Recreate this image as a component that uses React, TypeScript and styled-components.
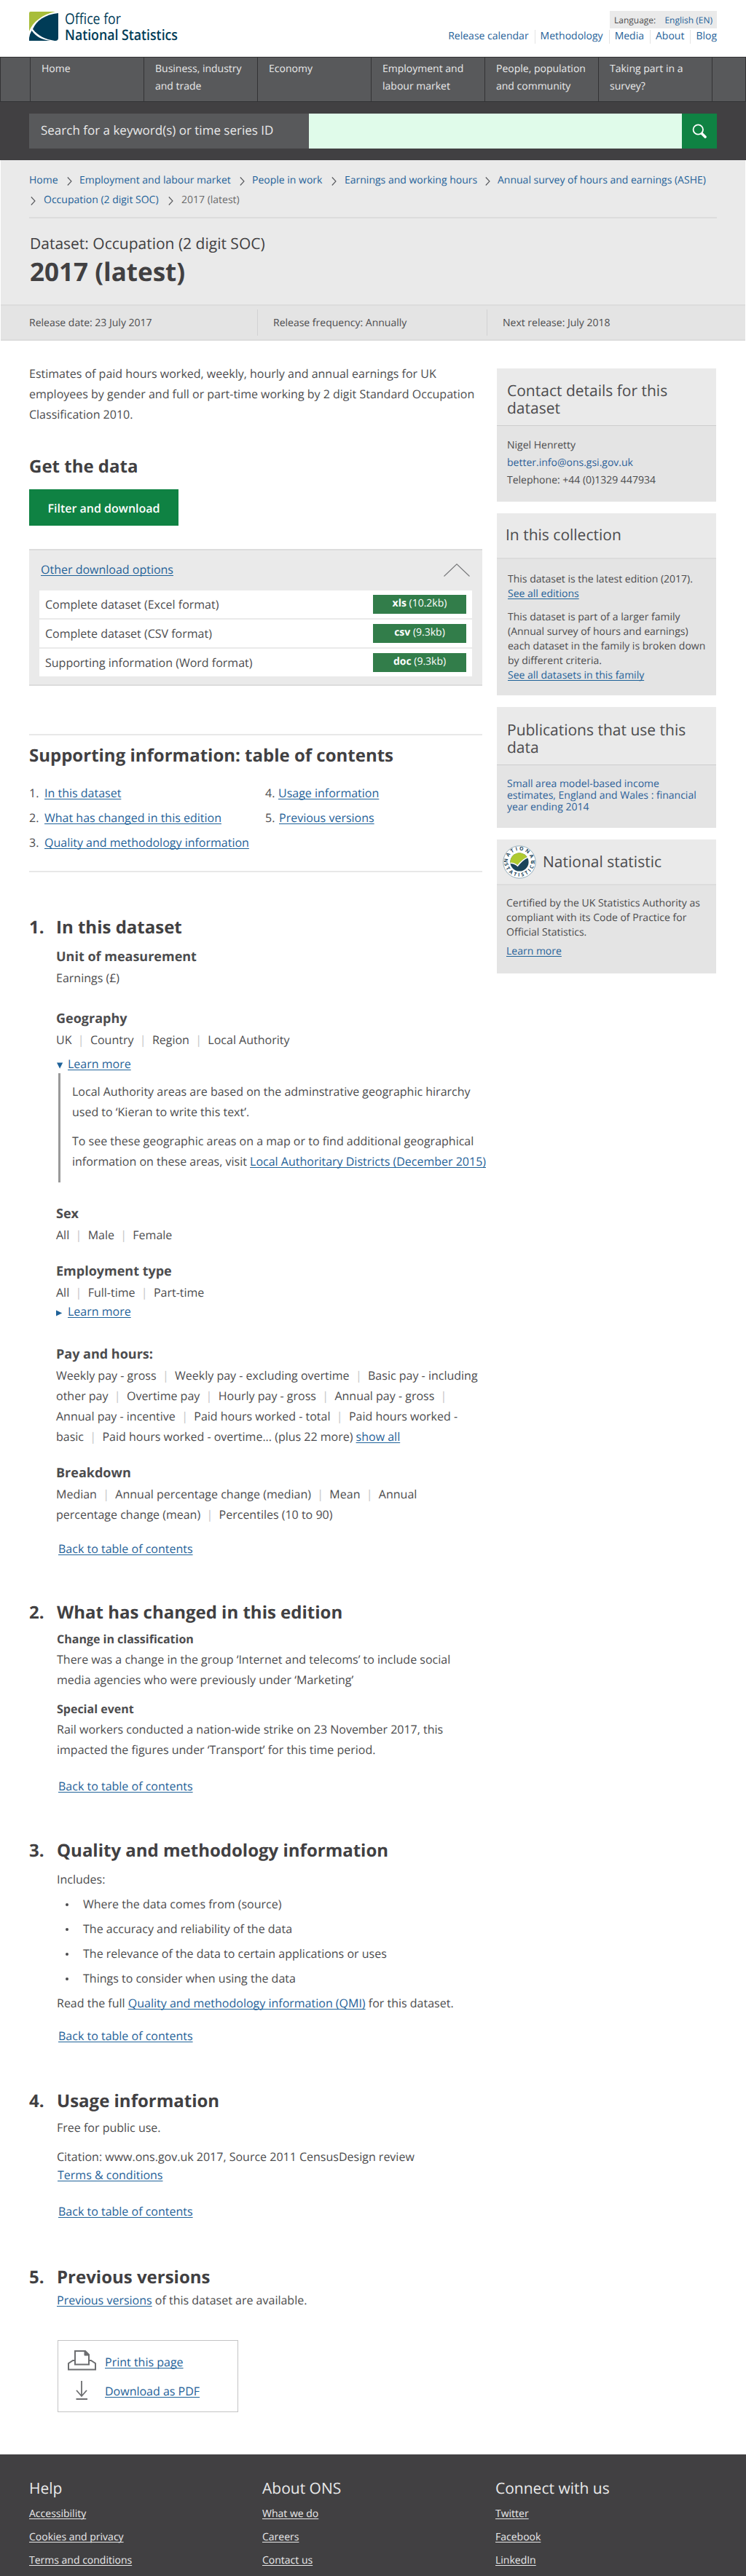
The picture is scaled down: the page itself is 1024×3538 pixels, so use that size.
import React from "react";
import styled, { createGlobalStyle } from "styled-components";

const c = {
  ink: "#414042",
  body: "#4c4c4e",
  link: "#1f6299",
  soft: "#eaeaea",
  mid: "#e4e4e4",
  rule: "#dcdcdc",
  dark: "#414042",
  slate: "#58595b",
  green: "#0f8243",
};

const Global = createGlobalStyle`
  * { box-sizing: border-box; }
  body {
    margin: 0;
    background: #fff;
    color: ${c.body};
    font-family: "Open Sans", "Noto Sans", sans-serif;
    font-size: 16px;
    line-height: 28px;
    text-rendering: geometricPrecision;
  }
`;

const Page = styled.div`
  width: 1024px;
  height: 3538px;
  overflow: hidden;
`;

const Link = styled.a`
  color: ${c.link};
  text-decoration: underline;
  text-decoration-thickness: 1px;
  text-underline-offset: 2px;
  text-decoration-skip-ink: none;
`;

/* ---------- header ---------- */
const Header = styled.header`
  display: flex;
  justify-content: space-between;
  height: 78px;
  padding: 15px 40px 0;
`;
const LogoSvg = styled.svg`
  margin-top: 1px;
  overflow: visible;
`;
const Utility = styled.div`
  display: flex;
  flex-direction: column;
  align-items: flex-end;
  font-size: 14px;
`;
const Language = styled.div`
  display: flex;
  justify-content: space-between;
  width: 147px;
  height: 24px;
  padding: 0 6px;
  background: ${c.soft};
  font-size: 12px;
  line-height: 25px;
  a { color: ${c.link}; }
`;
const UtilityLinks = styled.nav`
  display: flex;
  margin-top: 2px;
  a {
    height: 19px;
    padding: 0 8px 0 7px;
    border-right: 1px solid ${c.mid};
    color: ${c.link};
    line-height: 17px;
  }
  a:last-child { border: 0; padding-right: 0; }
`;

const NavBar = styled.nav`
  display: grid;
  grid-template-columns: 40px repeat(6, 156px) 1fr;
  height: 62px;
  border: 1px solid #333335;
  background: ${c.slate};
`;
const NavItem = styled.div`
  padding: 4px 0 0 15px;
  border-left: 1px solid #333335;
  color: #e9e9ea;
  font-size: 14px;
  line-height: 24px;
  white-space: pre-line;
`;
const SearchBand = styled.div`
  display: flex;
  height: 80px;
  padding: 16px 40px;
  background: ${c.dark};
`;
const SearchLabel = styled.label`
  width: 384px;
  padding-left: 16px;
  background: ${c.slate};
  color: #e9e9ea;
  font-size: 17px;
  line-height: 46px;
`;
const SearchField = styled.div`
  flex: 1;
  background: #e0fbea;
`;
const SearchButton = styled.div`
  display: flex;
  align-items: center;
  justify-content: center;
  width: 48px;
  background: ${c.green};
`;

/* ---------- title band ---------- */
const TitleBand = styled.section`
  height: 198px;
  margin: 0 1px;
  padding: 14px 39px 0;
  background: ${c.soft};
`;
const CrumbRow = styled.div`
  display: flex;
  height: 27px;
  font-size: 14px;
  line-height: 27px;
  white-space: nowrap;
`;
const Crumb = styled.span<{ $w: number; $current?: boolean }>`
  width: ${(p) => p.$w}px;
  color: ${(p) => (p.$current ? "#6a6a6c" : c.link)};
`;
const ChevronBox = styled.span<{ $w: number }>`
  display: flex;
  align-items: center;
  width: ${(p) => p.$w}px;
  padding-top: 2px;
`;
const TitleInner = styled.div`
  margin-top: 10px;
  border-top: 2px solid ${c.rule};
`;
const Kicker = styled.div`
  margin: 21px 0 0 1px;
  color: ${c.ink};
  font-size: 21px;
  line-height: 28px;
`;
const Title = styled.h1`
  margin: 3px 0 0 1px;
  color: ${c.ink};
  font-size: 35px;
  font-weight: 700;
  line-height: 44px;
`;
const MetaBar = styled.div`
  display: grid;
  grid-template-columns: 313px 315px 1fr;
  height: 50px;
  margin: 0 1px;
  padding: 5px 0 0 39px;
  border-top: 2px solid ${c.rule};
  border-bottom: 2px solid ${c.rule};
  background: ${c.mid};
  font-size: 14px;
`;
const MetaItem = styled.div<{ $divided?: boolean }>`
  height: 36px;
  padding-left: ${(p) => (p.$divided ? 21 : 0)}px;
  border-left: ${(p) => (p.$divided ? `1px solid #d2d2d3` : "0")};
  line-height: 37px;
`;

/* ---------- body columns ---------- */
const Columns = styled.div`
  display: flex;
  height: 2903px;
  padding-left: 40px;
`;
const Main = styled.main`
  width: 642px;
  padding-top: 31px;
`;
const Side = styled.aside`
  display: flex;
  flex-direction: column;
  gap: 16px;
  width: 301px;
  padding-top: 38px;
`;

const H2 = styled.h2<{ $mt: number }>`
  display: flex;
  margin: ${(p) => p.$mt}px 0 0;
  color: ${c.ink};
  font-size: 24px;
  font-weight: 700;
  line-height: 32px;
  white-space: nowrap;
`;
const Num = styled.span`
  width: 38px;
`;
const H3 = styled.h3<{ $mt: number; $small?: boolean }>`
  margin: ${(p) => p.$mt}px 0 0;
  font-size: ${(p) => (p.$small ? 16 : 18)}px;
  font-weight: 700;
  line-height: 28px;
`;
const Para = styled.p<{ $mt: number; $tight?: boolean }>`
  margin: ${(p) => p.$mt}px 0 0;
  line-height: ${(p) => (p.$tight ? 20 : 28)}px;
  white-space: pre;
`;
const Line = styled.span`
  display: block;
`;
const Section = styled.section<{ $inset?: number }>`
  padding-left: ${(p) => p.$inset ?? 38}px;
  ${H2} { margin-left: -${(p) => p.$inset ?? 38}px; }
  ${Num} { width: ${(p) => p.$inset ?? 38}px; }
`;
const BackLine = styled.div<{ $mt: number; $ml: number }>`
  margin: ${(p) => p.$mt}px 0 0 ${(p) => p.$ml}px;
  line-height: 20px;
`;
const Bar = styled.span`
  color: #c4c4c5;
`;

const FilterButton = styled.div`
  width: 205px;
  height: 50px;
  margin-top: 15px;
  background: ${c.green};
  color: #fff;
  font-weight: 600;
  line-height: 53px;
  text-align: center;
`;
const Downloads = styled.div`
  width: 622px;
  height: 188px;
  margin-top: 32px;
  padding: 0 14px;
  border-top: 2px solid ${c.rule};
  border-bottom: 2px solid ${c.rule};
  background: ${c.soft};
`;
const DownloadsHead = styled.div`
  display: flex;
  justify-content: space-between;
  height: 55px;
  padding: 12px 3px 0 2px;
  svg { margin-top: 6px; }
`;
const DownloadRow = styled.div`
  display: flex;
  justify-content: space-between;
  height: 38px;
  margin-bottom: 2px;
  padding: 6px 8px;
  background: #fff;
  line-height: 26px;
`;
const FormatButton = styled.div`
  width: 128px;
  height: 26px;
  background: #327d4a;
  color: #fff;
  font-size: 14px;
  line-height: 24px;
  text-align: center;
  b { font-weight: 700; }
`;
const Hr = styled.hr<{ $mt: number }>`
  width: 622px;
  height: 2px;
  margin: ${(p) => p.$mt}px 0 0;
  border: 0;
  background: #e8e8e8;
`;
const Toc = styled.div`
  display: grid;
  grid-template-columns: 324px 1fr;
  margin-top: 18px;
  line-height: 34px;
`;
const TocItem = styled.div<{ $gap: number }>`
  display: flex;
  span { width: ${(p) => p.$gap}px; }
`;
const Disclosure = styled.div<{ $mt: number }>`
  display: flex;
  margin-top: ${(p) => p.$mt}px;
  line-height: 20px;
  svg { width: 10px; height: 9px; margin: 8px 6px 0 0; }
`;
const Quote = styled.div`
  margin: 3px 0 0 3px;
  padding: 11px 0 15px 16px;
  border-left: 3px solid #999;
`;
const Bullets = styled.ul`
  margin: 3px 0 0;
  padding: 0;
  list-style: none;
  line-height: 34px;
  li { display: flex; align-items: center; }
  li::before {
    content: "";
    width: 4px;
    height: 4px;
    margin: 2px 20px 0 12px;
    border-radius: 50%;
    background: ${c.body};
  }
`;
const Tools = styled.div`
  display: flex;
  flex-direction: column;
  width: 248px;
  height: 99px;
  margin: 41px 0 0 1px;
  padding: 13px 0 0 13px;
  border: 1px solid #c4c4c5;
`;
const ToolRow = styled.div<{ $mt?: number }>`
  display: flex;
  height: 28px;
  margin-top: ${(p) => p.$mt ?? 0}px;
  a { margin-left: 12px; line-height: 32px; }
`;

/* ---------- sidebar ---------- */
const Card = styled.section<{ $h: number }>`
  height: ${(p) => p.$h}px;
  background: ${c.mid};
  font-size: 14px;
`;
const CardHead = styled.div<{ $h: number; $pt: number; $pl: number; $line: number }>`
  display: flex;
  height: ${(p) => p.$h}px;
  padding: ${(p) => p.$pt}px 0 0 ${(p) => p.$pl}px;
  border-bottom: ${(p) => p.$line}px solid ${(p) => (p.$line === 1 ? "#cdcdce" : c.rule)};
  background: ${c.soft};
  color: ${c.body};
  font-size: 21px;
  line-height: 24px;
  white-space: pre;
`;
const CardText = styled.p<{ $pt: number; $lh: number; $pl: number }>`
  margin: 0;
  padding: ${(p) => p.$pt}px 0 0 ${(p) => p.$pl}px;
  line-height: ${(p) => p.$lh}px;
  white-space: pre;
`;
const PlainLink = styled.a`
  color: #2c6199;
`;
const Badge = styled.svg`
  margin: 8px 9px 0 0;
`;
const BadgeTitle = styled.div`
  padding-top: 19px;
`;

/* ---------- footer ---------- */
const Footer = styled.footer`
  display: grid;
  grid-template-columns: repeat(3, 320px);
  height: 167px;
  padding: 33px 0 0 40px;
  background: ${c.dark};
  color: #e9e9ea;
`;
const FooterTitle = styled.div`
  font-size: 21px;
  line-height: 28px;
`;
const FooterLinks = styled.div`
  display: flex;
  flex-direction: column;
  align-items: flex-start;
  margin-top: 5px;
  font-size: 14px;
  line-height: 32px;
  a { color: #e9e9ea; }
`;

const nav = [
  "Home",
  "Business, industry\nand trade",
  "Economy",
  "Employment and\nlabour market",
  "People, population\nand community",
  "Taking part in a\nsurvey?",
];
const footer = [
  { title: "Help", links: ["Accessibility", "Cookies and privacy", "Terms and conditions"] },
  { title: "About ONS", links: ["What we do", "Careers", "Contact us"] },
  { title: "Connect with us", links: ["Twitter", "Facebook", "LinkedIn"] },
];
const downloads = [
  ["Complete dataset (Excel format)", "xls", "(10.2kb)"],
  ["Complete dataset (CSV format)", "csv", "(9.3kb)"],
  ["Supporting information (Word format)", "doc", "(9.3kb)"],
];

const Logo = () => (
  <LogoSvg width="206" height="44" viewBox="0 0 206 44">
    <path d="M2 0H36C18 4 5 14 0 27V2Q0 0 2 0Z" fill="#a8bd3a" />
    <path d="M40 2V36Q40 40 36 40H35C22 38 12 33 5 24C10 12 22 4 40 2Z" fill="#003c57" />
    <path d="M3.5 26C9 34 17 38.500 29 40H0V36Q1 30 3.500 26Z" fill="#003c57" />
    <g fill="#003c57" fontFamily='"Open Sans", "Noto Sans", sans-serif'>
      <text x="49" y="17.300" fontSize="20.500" textLength="77" lengthAdjust="spacingAndGlyphs">Office for</text>
      <text x="49" y="39" fontSize="20" fontWeight="600" textLength="155" lengthAdjust="spacingAndGlyphs">National Statistics</text>
    </g>
  </LogoSvg>
);

const Chevron = ({ w }: { w: number }) => (
  <ChevronBox $w={w}>
    <svg width="7" height="12" viewBox="0 0 7 12" fill="none" stroke="#55565a" strokeWidth="1.100">
      <path d="M.8.5L6 6L.8 11.500" />
    </svg>
  </ChevronBox>
);

const BadgeIcon = () => (
  <Badge width="46" height="46" viewBox="0 0 46 46">
    <defs>
      <path id="arcTop" d="M6.700 25A16.400 16.400 0 1 1 39.300 25" />
      <path id="arcBottom" d="M2.200 24A20.900 20.900 0 0 0 43.800 24" />
    </defs>
    <circle cx="23" cy="23" r="22.200" fill="#fff" stroke="#7c9bab" strokeWidth=".8" />
    <circle cx="23" cy="23" r="12.600" fill="#1b4459" />
    <path d="M10.400 24A12.600 12.600 0 0 1 33.500 16C28 19 24 23 20.500 27.500C17.500 24.500 14 23.500 10.400 24Z" fill="#afca30" />
    <path d="M10.500 24.500C14 24 17 25 20.500 28.300C24.500 23 28.500 19 34.500 16.500" fill="none" stroke="#fff" strokeWidth="1.500" />
    <g fill="#1b4459" fontSize="6.900" fontWeight="700" fontFamily='"Open Sans", sans-serif'>
      <text><textPath href="#arcTop" startOffset="1" textLength="53">NATIONAL</textPath></text>
      <text><textPath href="#arcBottom" startOffset="1" textLength="62">STATISTICS</textPath></text>
    </g>
  </Badge>
);

/* Values divided by thin bars; an empty last value leaves the bar at the end of the line. */
const Options = ({ items }: { items: string[] }) => (
  <Line>
    {items.map((t, i) => (
      <React.Fragment key={i}>
        {i > 0 && <Bar>{"  |  "}</Bar>}
        {t}
      </React.Fragment>
    ))}
  </Line>
);

const Back = ({ mt, ml = 2 }: { mt: number; ml?: number }) => (
  <BackLine $mt={mt} $ml={ml}><Link>Back to table of contents</Link></BackLine>
);

export default function App() {
  return (
    <Page>
      <Global />
      <Header>
        <Logo />
        <Utility>
          <Language><span>Language:</span><a>English (EN)</a></Language>
          <UtilityLinks>
            <a>Release calendar</a><a>Methodology</a><a>Media</a><a>About</a><a>Blog</a>
          </UtilityLinks>
        </Utility>
      </Header>
      <NavBar>
        <span />
        {nav.map((n) => <NavItem key={n}>{n}</NavItem>)}
        <NavItem />
      </NavBar>
      <SearchBand>
        <SearchLabel>Search for a keyword(s) or time series ID</SearchLabel>
        <SearchField />
        <SearchButton>
          <svg width="20" height="20" viewBox="0 0 20 20" fill="none" stroke="#fff">
            <circle cx="8.300" cy="8" r="6.700" strokeWidth="1.800" />
            <path d="M13.500 13.500L18 18" strokeWidth="3.600" strokeLinecap="round" />
          </svg>
        </SearchButton>
      </SearchBand>

      <TitleBand>
        <CrumbRow>
          <Crumb $w={52}>Home</Crumb><Chevron w={17} />
          <Crumb $w={220}>Employment and labour market</Crumb><Chevron w={17} />
          <Crumb $w={109}>People in work</Crumb><Chevron w={18} />
          <Crumb $w={193}>Earnings and working hours</Crumb><Chevron w={17} />
          <Crumb $w={290}>Annual survey of hours and earnings (ASHE)</Crumb>
        </CrumbRow>
        <CrumbRow>
          <ChevronBox $w={2} /><Chevron w={18} />
          <Crumb $w={171}>Occupation (2 digit SOC)</Crumb><Chevron w={18} />
          <Crumb $w={90} $current>2017 (latest)</Crumb>
        </CrumbRow>
        <TitleInner>
          <Kicker>Dataset: Occupation (2 digit SOC)</Kicker>
          <Title>2017 (latest)</Title>
        </TitleInner>
      </TitleBand>
      <MetaBar>
        <MetaItem>Release date: 23 July 2017</MetaItem>
        <MetaItem $divided>Release frequency: Annually</MetaItem>
        <MetaItem $divided>Next release: July 2018</MetaItem>
      </MetaBar>

      <Columns>
        <Main>
          <Para $mt={0}>{"Estimates of paid hours worked, weekly, hourly and annual earnings for UK\nemployees by gender and full or part-time working by 2 digit Standard Occupation\nClassification 2010."}</Para>
          <H2 $mt={42}>Get the data</H2>
          <FilterButton>Filter and download</FilterButton>
          <Downloads>
            <DownloadsHead>
              <Link>Other download options</Link>
              <svg width="36" height="18" viewBox="0 0 36 18" fill="none" stroke="#77787a" strokeWidth="1.100">
                <path d="M.5 17.500L18 .8L35.500 17.500" />
              </svg>
            </DownloadsHead>
            {downloads.map(([name, ext, size]) => (
              <DownloadRow key={ext}>
                <span>{name}</span>
                <FormatButton><b>{ext}</b> {size}</FormatButton>
              </DownloadRow>
            ))}
          </Downloads>
          <Hr $mt={66} />
          <H2 $mt={12}>Supporting information: table of contents</H2>
          <Toc>
            <TocItem $gap={21}><span>1.</span><Link>In this dataset</Link></TocItem>
            <TocItem $gap={18}><span>4.</span><Link>Usage information</Link></TocItem>
            <TocItem $gap={21}><span>2.</span><Link>What has changed in this edition</Link></TocItem>
            <TocItem $gap={19}><span>5.</span><Link>Previous versions</Link></TocItem>
            <TocItem $gap={21}><span>3.</span><Link>Quality and methodology information</Link></TocItem>
          </Toc>
          <Hr $mt={22} />

          <Section $inset={37}>
            <H2 $mt={60}><Num>1.</Num>In this dataset</H2>
            <H3 $mt={10}>Unit of measurement</H3>
            <Para $mt={1}>Earnings (£)</Para>
            <H3 $mt={28}>Geography</H3>
            <Para $mt={1}><Options items={["UK", "Country", "Region", "Local Authority"]} /></Para>
            <Disclosure $mt={9}>
              <svg viewBox="0 0 10 9"><path d="M1 .5H9.200L5.100 8.800Z" fill={c.link} /></svg>
              <Link>Learn more</Link>
            </Disclosure>
            <Quote>
              <Para $mt={0}>{"Local Authority areas are based on the adminstrative geographic hirarchy\nused to ‘Kieran to write this text’."}</Para>
              <Para $mt={12}>
                <Line>To see these geographic areas on a map or to find additional geographical</Line>
                <Line>{"information on these areas, visit "}<Link>Local Authoritary Districts (December 2015)</Link></Line>
              </Para>
            </Quote>
            <H3 $mt={29}>Sex</H3>
            <Para $mt={1}><Options items={["All", "Male", "Female"]} /></Para>
            <H3 $mt={22}>Employment type</H3>
            <Para $mt={1}><Options items={["All", "Full-time", "Part-time"]} /></Para>
            <Disclosure $mt={2}>
              <svg viewBox="0 0 10 9"><path d="M0 .4L8.300 4.500L0 8.600Z" fill={c.link} /></svg>
              <Link>Learn more</Link>
            </Disclosure>
            <H3 $mt={35}>Pay and hours:</H3>
            <Para $mt={1}>
              <Options items={["Weekly pay - gross", "Weekly pay - excluding overtime", "Basic pay - including"]} />
              <Options items={["other pay", "Overtime pay", "Hourly pay - gross", "Annual pay - gross", ""]} />
              <Options items={["Annual pay - incentive", "Paid hours worked - total", "Paid hours worked -"]} />
              <Line>basic<Bar>{"  |  "}</Bar>{"Paid hours worked - overtime... (plus 22 more) "}<Link>show all</Link></Line>
            </Para>
            <H3 $mt={22}>Breakdown</H3>
            <Para $mt={1}>
              <Options items={["Median", "Annual percentage change (median)", "Mean", "Annual"]} />
              <Options items={["percentage change (mean)", "Percentiles (10 to 90)"]} />
            </Para>
            <Back mt={23} ml={3} />
          </Section>

          <Section>
            <H2 $mt={62}><Num>2.</Num>What has changed in this edition</H2>
            <H3 $mt={6} $small>Change in classification</H3>
            <Para $mt={0}>{"There was a change in the group ‘Internet and telecoms’ to include social\nmedia agencies who were previously under ‘Marketing’"}</Para>
            <H3 $mt={12} $small>Special event</H3>
            <Para $mt={0}>{"Rail workers conducted a nation-wide strike on 23 November 2017, this\nimpacted the figures under ‘Transport’ for this time period."}</Para>
            <Back mt={26} />
          </Section>

          <Section>
            <H2 $mt={63}><Num>3.</Num>Quality and methodology information</H2>
            <Para $mt={9}>Includes:</Para>
            <Bullets>
              <li>Where the data comes from (source)</li>
              <li>The accuracy and reliability of the data</li>
              <li>The relevance of the data to certain applications or uses</li>
              <li>Things to consider when using the data</li>
            </Bullets>
            <Para $mt={3}>Read the full <Link>Quality and methodology information (QMI)</Link> for this dataset.</Para>
            <Back mt={21} />
          </Section>

          <Section>
            <H2 $mt={64}><Num>4.</Num>Usage information</H2>
            <Para $mt={6}>Free for public use.</Para>
            <Para $mt={12}>Citation: www.ons.gov.uk 2017, Source 2011 CensusDesign review</Para>
            <BackLine $mt={1} $ml={1}><Link>Terms &amp; conditions</Link></BackLine>
            <Back mt={30} />
          </Section>

          <Section>
            <H2 $mt={65}><Num>5.</Num>Previous versions</H2>
            <Para $mt={1}><Link>Previous versions</Link> of this dataset are available.</Para>
            <Tools>
              <ToolRow>
                <svg width="39" height="28" viewBox="0 0 39 28" fill="none" stroke="#6d6e70" strokeWidth="2">
                  <path d="M10 14H7L1 18V26.500H38V18L32 14H29" />
                  <path d="M10 1H24L29 6V19.500H10Z" />
                  <path d="M23 1V7H29Z" fill="#6d6e70" strokeWidth="1" />
                </svg>
                <Link>Print this page</Link>
              </ToolRow>
              <ToolRow $mt={12}>
                <svg width="39" height="28" viewBox="0 0 39 28" fill="none" stroke="#6d6e70" strokeWidth="1.800">
                  <path d="M19 2V23M12 15L19 23L26 15" />
                  <path d="M11.500 27H27" strokeWidth="2" />
                </svg>
                <Link>Download as PDF</Link>
              </ToolRow>
            </Tools>
          </Section>
        </Main>

        <Side>
          <Card $h={183}>
            <CardHead $h={79} $pt={19} $pl={14} $line={1}>{"Contact details for this\ndataset"}</CardHead>
            <CardText $pt={15} $lh={24} $pl={14}>
              <Line>Nigel Henretty</Line>
              <Line><PlainLink>better.info@ons.gsi.gov.uk</PlainLink></Line>
              <Line>Telephone: +44 (0)1329 447934</Line>
            </CardText>
          </Card>
          <Card $h={250}>
            <CardHead $h={63} $pt={18} $pl={12} $line={2}>In this collection</CardHead>
            <CardText $pt={18} $lh={20} $pl={15}>
              <Line>This dataset is the latest edition (2017).</Line>
              <Line><Link>See all editions</Link></Line>
            </CardText>
            <CardText $pt={12} $lh={20} $pl={15}>
              <Line>{"This dataset is part of a larger family\n(Annual survey of hours and earnings)\neach dataset in the family is broken down\nby different criteria."}</Line>
              <Line><Link>See all datasets in this family</Link></Line>
            </CardText>
          </Card>
          <Card $h={166}>
            <CardHead $h={80} $pt={20} $pl={14} $line={1}>{"Publications that use this\ndata"}</CardHead>
            <CardText $pt={18} $lh={16} $pl={14}>
              <PlainLink>{"Small area model-based income\nestimates, England and Wales : financial\nyear ending 2014"}</PlainLink>
            </CardText>
          </Card>
          <Card $h={184}>
            <CardHead $h={63} $pt={0} $pl={8} $line={2}>
              <BadgeIcon />
              <BadgeTitle>National statistic</BadgeTitle>
            </CardHead>
            <CardText $pt={15} $lh={20} $pl={13}>{"Certified by the UK Statistics Authority as\ncompliant with its Code of Practice for\nOfficial Statistics."}</CardText>
            <CardText $pt={6} $lh={20} $pl={13}><Link>Learn more</Link></CardText>
          </Card>
        </Side>
      </Columns>

      <Footer>
        {footer.map((f) => (
          <div key={f.title}>
            <FooterTitle>{f.title}</FooterTitle>
            <FooterLinks>{f.links.map((l) => <Link key={l}>{l}</Link>)}</FooterLinks>
          </div>
        ))}
      </Footer>
    </Page>
  );
}
